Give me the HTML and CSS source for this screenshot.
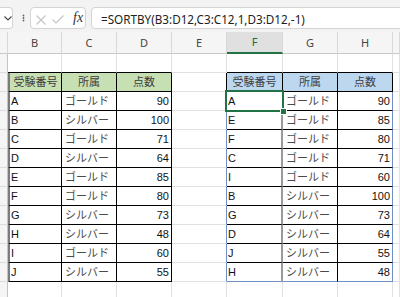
FILE: index.html
```html
<!DOCTYPE html>
<html lang="ja">

<head>
    <meta charset="UTF-8">
    <meta name="viewport" content="width=device-width, initial-scale=1.0">
    <title>SORTBY</title>
    <link rel="stylesheet" href="styles.css">
</head>

<body>

    <!-- 数式バー -->
    <div class="toolbar">
        <div class="namebox">
            <svg width="8" height="5" viewBox="0 0 8 5"><path d="M0.5 0.5 L4 4 L7.5 0.5" fill="none" stroke="#444" stroke-width="1.1"/></svg>
        </div>
        <div class="dots">
            <svg width="3" height="8" viewBox="0 0 3 8"><circle cx="1.5" cy="1.5" r="0.9" fill="#666"/><circle cx="1.5" cy="4" r="0.9" fill="#666"/><circle cx="1.5" cy="6.5" r="0.9" fill="#666"/></svg>
        </div>
        <div class="fxbox">
            <svg class="icon-x" width="10" height="10" viewBox="0 0 10 10"><path d="M0.5 0.5 L9.5 9.5 M9.5 0.5 L0.5 9.5" stroke="#c4c4c4" stroke-width="1.1"/></svg>
            <svg class="icon-ok" width="12" height="9" viewBox="0 0 12 9"><path d="M0.5 4.5 L4 8 L11.5 0.5" fill="none" stroke="#c4c4c4" stroke-width="1.1"/></svg>
            <span class="fx">fx</span>
        </div>
        <div class="formula">=SORTBY(B3:D12,C3:C12,1,D3:D12,-1)</div>
    </div>

    <!-- シート -->
    <div class="sheet">
        <!-- 列見出し -->
        <div class="cell col corner"></div>
        <div class="cell col">B</div>
        <div class="cell col">C</div>
        <div class="cell col">D</div>
        <div class="cell col">E</div>
        <div class="cell col col-sel">F</div>
        <div class="cell col">G</div>
        <div class="cell col">H</div>
        <div class="cell col"></div>

        <!-- 1行目 -->
        <div class="cell rh"></div>
        <div class="cell above"></div>
        <div class="cell above"></div>
        <div class="cell above"></div>
        <div class="cell"></div>
        <div class="cell above"></div>
        <div class="cell above"></div>
        <div class="cell above"></div>
        <div class="cell"></div>

        <!-- 2行目: 見出し -->
        <div class="cell rh"></div>
        <div class="cell t first hd-green ctr">受験番号</div>
        <div class="cell t hd-green ctr">所属</div>
        <div class="cell t hd-green ctr">点数</div>
        <div class="cell edge-k"></div>
        <div class="cell t hd-blue ctr">受験番号</div>
        <div class="cell t hd-blue ctr">所属</div>
        <div class="cell t hd-blue ctr">点数</div>
        <div class="cell"></div>

        <!-- 3行目 -->
        <div class="cell rh"></div>
        <div class="cell t first id">A</div>
        <div class="cell t kana">ゴールド</div>
        <div class="cell t num">90</div>
        <div class="cell edge-b"></div>
        <div class="cell t id selected">A</div>
        <div class="cell t kana">ゴールド</div>
        <div class="cell t num spill-r">90</div>
        <div class="cell"></div>

        <!-- 4行目 -->
        <div class="cell rh"></div>
        <div class="cell t first id">B</div>
        <div class="cell t kana">シルバー</div>
        <div class="cell t num">100</div>
        <div class="cell edge-b"></div>
        <div class="cell t id split">E</div>
        <div class="cell t kana">ゴールド</div>
        <div class="cell t num spill-r">85</div>
        <div class="cell"></div>

        <!-- 5行目 -->
        <div class="cell rh"></div>
        <div class="cell t first id">C</div>
        <div class="cell t kana">ゴールド</div>
        <div class="cell t num">71</div>
        <div class="cell edge-b"></div>
        <div class="cell t id split">F</div>
        <div class="cell t kana">ゴールド</div>
        <div class="cell t num spill-r">80</div>
        <div class="cell"></div>

        <!-- 6行目 -->
        <div class="cell rh"></div>
        <div class="cell t first id">D</div>
        <div class="cell t kana">シルバー</div>
        <div class="cell t num">64</div>
        <div class="cell edge-b"></div>
        <div class="cell t id split">C</div>
        <div class="cell t kana">ゴールド</div>
        <div class="cell t num spill-r">71</div>
        <div class="cell"></div>

        <!-- 7行目 -->
        <div class="cell rh"></div>
        <div class="cell t first id">E</div>
        <div class="cell t kana">ゴールド</div>
        <div class="cell t num">85</div>
        <div class="cell edge-b"></div>
        <div class="cell t id split">I</div>
        <div class="cell t kana">ゴールド</div>
        <div class="cell t num spill-r">60</div>
        <div class="cell"></div>

        <!-- 8行目 -->
        <div class="cell rh"></div>
        <div class="cell t first id">F</div>
        <div class="cell t kana">ゴールド</div>
        <div class="cell t num">80</div>
        <div class="cell edge-b"></div>
        <div class="cell t id split">B</div>
        <div class="cell t kana">シルバー</div>
        <div class="cell t num spill-r">100</div>
        <div class="cell"></div>

        <!-- 9行目 -->
        <div class="cell rh"></div>
        <div class="cell t first id">G</div>
        <div class="cell t kana">シルバー</div>
        <div class="cell t num">73</div>
        <div class="cell edge-b"></div>
        <div class="cell t id split">G</div>
        <div class="cell t kana">シルバー</div>
        <div class="cell t num spill-r">73</div>
        <div class="cell"></div>

        <!-- 10行目 -->
        <div class="cell rh"></div>
        <div class="cell t first id">H</div>
        <div class="cell t kana">シルバー</div>
        <div class="cell t num">48</div>
        <div class="cell edge-b"></div>
        <div class="cell t id split">D</div>
        <div class="cell t kana">シルバー</div>
        <div class="cell t num spill-r">64</div>
        <div class="cell"></div>

        <!-- 11行目 -->
        <div class="cell rh"></div>
        <div class="cell t first id">I</div>
        <div class="cell t kana">ゴールド</div>
        <div class="cell t num">60</div>
        <div class="cell edge-b"></div>
        <div class="cell t id split">J</div>
        <div class="cell t kana">シルバー</div>
        <div class="cell t num spill-r">55</div>
        <div class="cell"></div>

        <!-- 12行目 -->
        <div class="cell rh"></div>
        <div class="cell t first id">J</div>
        <div class="cell t kana">シルバー</div>
        <div class="cell t num">55</div>
        <div class="cell edge-b"></div>
        <div class="cell t id split spill-b">H</div>
        <div class="cell t kana spill-b">シルバー</div>
        <div class="cell t num spill-r spill-b">48</div>
        <div class="cell"></div>

        <!-- 13行目 -->
        <div class="cell rh"></div>
        <div class="cell"></div>
        <div class="cell"></div>
        <div class="cell"></div>
        <div class="cell"></div>
        <div class="cell"></div>
        <div class="cell"></div>
        <div class="cell"></div>
        <div class="cell"></div>
    </div>

</body>

</html>
```

FILE: styles.css
```css
html,
body {
    margin: 0;
    padding: 0;
}

body {
    width: 400px;
    height: 297px;
    overflow: hidden;
    background: #fff;
    font-family: "Liberation Sans", "Noto Sans CJK JP", sans-serif;
}

/* 数式バー */
.toolbar {
    display: flex;
    align-items: flex-start;
    height: 32px;
    padding-top: 7px;
    box-sizing: border-box;
    background: #f3f3f3;
}

.namebox {
    display: flex;
    align-items: center;
    width: 13px;
    height: 22px;
    padding-left: 4px;
    box-sizing: border-box;
    background: #fff;
    border: 1px solid #d4d4d4;
    border-left: none;
    border-radius: 0 4px 4px 0;
}

.dots {
    display: flex;
    align-items: center;
    height: 22px;
    margin-left: 9px;
}

.fxbox {
    display: flex;
    align-items: center;
    width: 56px;
    height: 22px;
    margin-left: 5px;
    box-sizing: border-box;
    background: #fff;
    border: 1px solid #d4d4d4;
    border-radius: 4px;
}

.icon-x {
    margin-left: 5px;
    margin-top: 3px;
}

.icon-ok {
    margin-left: 6px;
    margin-top: 3px;
}

.fx {
    margin-left: 9px;
    font-family: "Liberation Serif", serif;
    font-style: italic;
    font-size: 14px;
    color: #333;
}

.formula {
    flex: 1;
    height: 22px;
    margin-left: 5px;
    margin-right: -6px;
    padding-left: 9px;
    padding-top: 1px;
    box-sizing: border-box;
    background: #fff;
    border: 1px solid #d4d4d4;
    border-radius: 4px;
    font-family: "Noto Sans", sans-serif;
    font-size: 11.7px;
    line-height: 20px;
    color: #222;
    white-space: nowrap;
}

/* シート */
.sheet {
    display: grid;
    grid-template-columns: 8px 54px 55px 55px 55px 56px 55px 55px 1fr;
    grid-template-rows: 22px repeat(13, 19px);
}

.cell {
    box-sizing: border-box;
    border-right: 1px solid #e1e1e1;
    border-bottom: 1px solid #e1e1e1;
    font-size: 11px;
    line-height: 18px;
    white-space: nowrap;
    overflow: hidden;
    color: #111;
}

.col {
    background: #f5f5f5;
    border-right-color: #d8d8d8;
    border-bottom-color: #c8c8c8;
    font-family: "Noto Sans", sans-serif;
    font-size: 11px;
    line-height: 21px;
    text-align: center;
    color: #444;
}

.col-sel {
    background: #e0e0e0;
    border-bottom: 2px solid #217346;
    line-height: 20px;
    color: #1d6b40;
}

.rh {
    background: #f5f5f5;
    border-right-color: #c4c4c4;
    border-bottom-color: #dcdcdc;
}

/* 表の罫線 */
.above {
    border-bottom-color: #000;
}

.t {
    border-right-color: #000;
    border-bottom-color: #000;
}

.first {
    border-left: 2px solid #7c7c7c;
}

.edge-k {
    border-right-color: #000;
}

.edge-b {
    border-right-color: #6f8fc6;
}

.split {
    border-right: 2px solid #9a9a9a;
}

.spill-r {
    border-right-color: #6f8fc6;
}

.spill-b {
    border-bottom-color: #6f8fc6;
}

.hd-green {
    background: #c6e0b4;
}

.hd-blue {
    background: #bdd7ee;
}

.ctr {
    text-align: center;
    color: #3c3c3c;
}

.id {
    padding-left: 1px;
}

.kana {
    padding-left: 3px;
    color: #4a4a4a;
}

.num {
    padding-right: 2px;
    text-align: right;
}

/* 選択セル */
.selected {
    position: relative;
    overflow: visible;
    z-index: 1;
    padding-left: 1px;
}

.selected::after {
    content: "";
    position: absolute;
    top: -2px;
    left: -2px;
    right: -2px;
    bottom: -2px;
    border: 2px solid #217346;
}

.selected::before {
    content: "";
    position: absolute;
    right: -5px;
    bottom: -5px;
    width: 5px;
    height: 5px;
    background: #217346;
    border: 1px solid #fff;
    z-index: 2;
}
```
